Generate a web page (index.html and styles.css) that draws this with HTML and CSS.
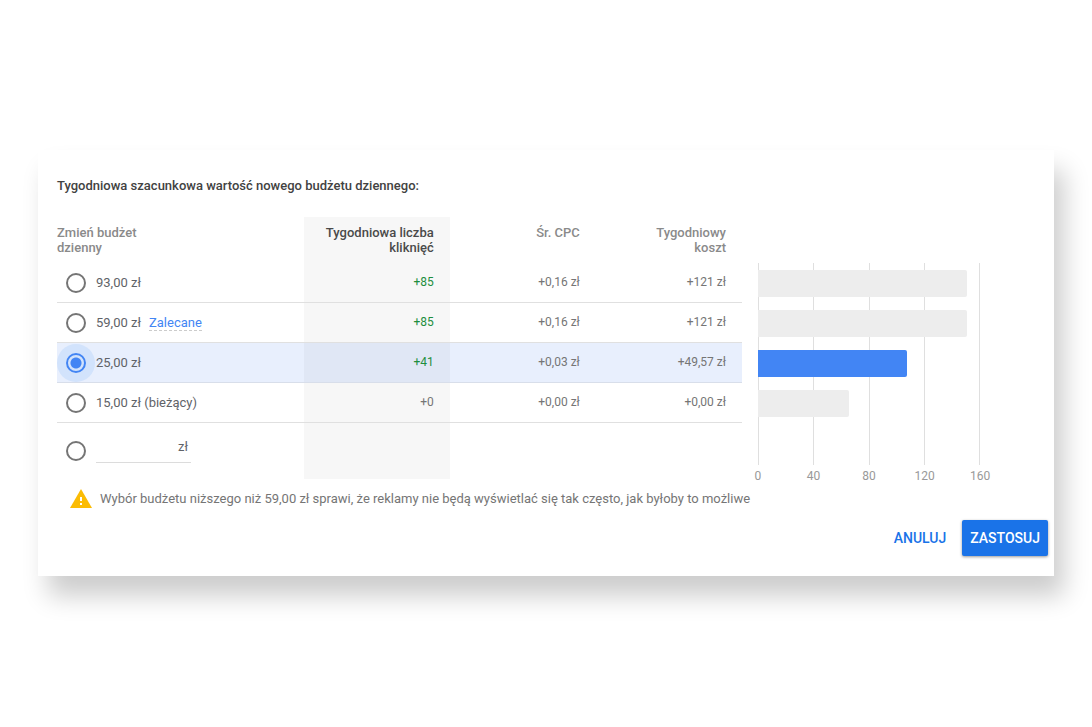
FILE: index.html
```html
<!DOCTYPE html>
<html lang="pl">
<head>
<meta charset="utf-8">
<title>Budżet dzienny</title>
<link rel="stylesheet" href="styles.css">
</head>
<body>
<form class="card">
  <h1 class="title">Tygodniowa szacunkowa wartość nowego budżetu dziennego:</h1>
  <div class="content">
    <table class="budgets">
      <thead>
        <tr>
          <th class="option-col" scope="col">Zmień budżet<br>dzienny</th>
          <th class="clicks" scope="col">Tygodniowa liczba<br>kliknięć</th>
          <th scope="col">Śr. CPC</th>
          <th scope="col">Tygodniowy<br>koszt</th>
        </tr>
      </thead>
      <tbody>
        <tr>
          <td class="option-col"><div class="option"><input class="radio" type="radio" name="budget" id="b93"><label for="b93">93,00 zł</label></div></td>
          <td class="clicks gain">+85</td><td>+0,16 zł</td><td>+121 zł</td>
        </tr>
        <tr>
          <td class="option-col"><div class="option"><input class="radio" type="radio" name="budget" id="b59"><label for="b59">59,00 zł</label><a class="hint" href="#">Zalecane</a></div></td>
          <td class="clicks gain">+85</td><td>+0,16 zł</td><td>+121 zł</td>
        </tr>
        <tr class="selected">
          <td class="option-col"><div class="option"><input class="radio" type="radio" name="budget" id="b25" checked><label for="b25">25,00 zł</label></div></td>
          <td class="clicks gain">+41</td><td>+0,03 zł</td><td>+49,57 zł</td>
        </tr>
        <tr>
          <td class="option-col"><div class="option"><input class="radio" type="radio" name="budget" id="b15"><label for="b15">15,00 zł (bieżący)</label></div></td>
          <td class="clicks">+0</td><td>+0,00 zł</td><td>+0,00 zł</td>
        </tr>
        <tr class="custom-row">
          <td class="option-col"><div class="option"><input class="radio" type="radio" name="budget" id="custom" aria-label="Inna kwota"><span class="amount"><input class="amount-input" type="text" id="amount" aria-label="Kwota"><label for="amount">zł</label></span></div></td>
          <td class="clicks"></td><td></td><td></td>
        </tr>
      </tbody>
    </table>
    <div class="chart">
      <div class="plot">
        <div class="grid-lines"><i></i><i></i><i></i><i></i></div>
        <div class="bars">
          <div class="bar" style="width:94%"></div>
          <div class="bar" style="width:94%"></div>
          <div class="bar active" style="width:67%"></div>
          <div class="bar" style="width:41%"></div>
        </div>
      </div>
      <div class="axis"><span>0</span><span>40</span><span>80</span><span>120</span><span>160</span></div>
    </div>
  </div>
  <div class="warning">
    <svg width="22" height="19" viewBox="0 0 22 19" aria-hidden="true">
      <path fill="#fbbc04" d="M11 0 22 19H0z"/>
      <path fill="#fff" d="M10 8h2v4h-2zM10 14h2v2h-2z"/>
    </svg>
    <p>Wybór budżetu niższego niż 59,00 zł sprawi, że reklamy nie będą wyświetlać się tak często, jak byłoby to możliwe</p>
  </div>
  <div class="actions">
    <button class="btn" type="button">ANULUJ</button>
    <button class="btn primary" type="button">ZASTOSUJ</button>
  </div>
</form>
</body>
</html>
```
FILE: styles.css
```css
* { box-sizing: border-box; }

body {
  margin: 0;
  padding: 150px 38px;
  background: #fff;
  color: #757575;
  font: 13px/15px Roboto, "Noto Sans", sans-serif;
}

.card {
  padding: 28px 6px 20px 19px;
  background: #fff;
  box-shadow: 10px 20px 24px rgba(0, 0, 0, .2);
}

.title {
  margin: 0 0 23px;
  color: #424242;
  font-size: 13px;
  font-weight: 500;
  line-height: 16px;
}

.content {
  display: grid;
  grid-template-columns: 1fr 222px;
  align-items: start;
  gap: 16px;
  padding-right: 68px;
}

.budgets {
  width: 100%;
  table-layout: fixed;
  border-collapse: separate;
  border-spacing: 0;
}

.budgets th {
  height: 46px;
  padding: 8px 16px 0 0;
  color: #8a8a8a;
  font-weight: 500;
  text-align: right;
  vertical-align: top;
}

.budgets td {
  height: 40px;
  padding: 0 16px 0 0;
  border-bottom: 1px solid #e0e0e0;
  font-size: 12px;
  text-align: right;
}

.budgets .option-col {
  width: 36%;
  padding-right: 0;
  text-align: left;
}

.budgets td.option-col { font-size: 13px; color: #5f6368; }
.budgets .clicks { background: #f7f7f7; }
.budgets th.clicks { color: #4a4a4a; }
.budgets .gain { color: #1e8e3e; }

.selected td { background: #e8effd; border-color: #d8deea; }
.selected td.clicks { background: #e0e7f5; }
.budgets .custom-row td { height: 56px; border: 0; }

.option {
  display: flex;
  align-items: center;
  padding-left: 9px;
}

.radio {
  appearance: none;
  flex: none;
  width: 20px;
  height: 20px;
  margin: 0 10px 0 0;
  border: 2px solid #757575;
  border-radius: 50%;
}

.radio:checked {
  border-color: #4285f4;
  background: radial-gradient(circle, #4285f4 5px, #d2e3fc 6px);
  box-shadow: 0 0 0 9px #d2e3fc;
}

.hint {
  margin-left: 8px;
  border-bottom: 1px dashed #ccc;
  color: #4285f4;
  text-decoration: none;
}

.amount {
  display: flex;
  width: 95px;
  height: 24px;
  padding-right: 3px;
  border-bottom: 1px solid #dcdcdc;
}

.amount-input {
  flex: 1;
  min-width: 0;
  height: 16px;
  padding: 0;
  border: 0;
  outline: 0;
  background: none;
  font: inherit;
}

.chart { padding-top: 46px; }

.plot { display: grid; }
.grid-lines, .bars { grid-area: 1 / 1; }

.grid-lines {
  display: grid;
  grid-template-columns: repeat(4, 1fr);
  border-right: 1px solid #dfdfdf;
}

.grid-lines i { border-left: 1px solid #dfdfdf; }

.bars {
  display: grid;
  gap: 13px;
  padding: 7px 0 48px;
}

.bar {
  height: 27px;
  border-radius: 0 2px 2px 0;
  background: #ededed;
}

.bar.active { background: #4285f4; }

.axis {
  display: grid;
  grid-template-columns: repeat(5, 1fr);
  margin: 4px -28px 0;
  color: #999;
  font-size: 12px;
  text-align: center;
}

.warning {
  display: flex;
  align-items: center;
  gap: 8px;
  margin: 5px 0 12px;
  padding-left: 13px;
}

.warning p { margin: 0; }

.actions {
  display: flex;
  justify-content: flex-end;
  gap: 8px;
}

.btn {
  height: 36px;
  padding: 0 8px;
  border: 0;
  border-radius: 2px;
  background: none;
  color: #1a73e8;
  font: 500 14px/16px Roboto, "Noto Sans", sans-serif;
}

.btn.primary {
  background: #1a73e8;
  box-shadow: 0 1px 3px rgba(0, 0, 0, .4);
  color: #fff;
}
```
